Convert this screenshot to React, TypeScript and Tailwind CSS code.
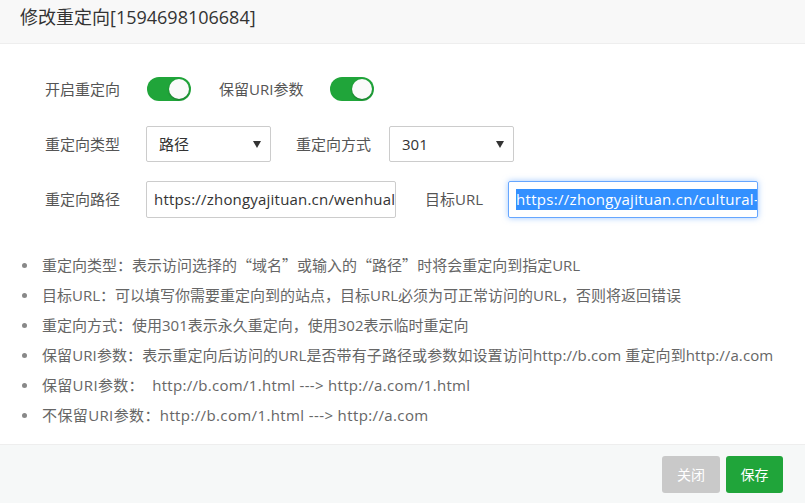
import React from "react";

const font = { fontFamily: '"Open Sans", "Noto Sans CJK SC", sans-serif' };
const cjk = { fontFamily: '"Noto Sans CJK SC", sans-serif' };

function Toggle() {
  return (
    <div className="relative w-[44px] h-[24px] rounded-full bg-[#20a53a]">
      <div className="absolute right-[2px] top-[2px] w-[20px] h-[20px] rounded-full bg-[#fafafa] shadow-[0_1px_2px_rgba(0,0,0,0.3)]" />
    </div>
  );
}

function Select({ value }: { value: string }) {
  return (
    <div className="w-[125px] h-[36px] border border-[#cccccc] rounded-[2px] flex items-center justify-between pl-[12px] pr-[9px] text-[15px] text-[#333]">
      <span>{value}</span>
      <svg width="8" height="8" viewBox="0 0 8 8">
        <path d="M0 1 L8 1 L4 8 Z" fill="#333" />
      </svg>
    </div>
  );
}

function Q({ c }: { c: string }) {
  return <span style={cjk}>{c}</span>;
}

export default function App() {
  const notes: { n: React.ReactNode; t: string }[] = [
    { n: <>重定向类型：表示访问选择的<Q c="“" />域名<Q c="”" />或输入的<Q c="“" />路径<Q c="”" />时将会重定向到指定URL</>, t: "" },
    { n: "目标URL：可以填写你需要重定向到的站点，目标URL必须为可正常访问的URL，否则将返回错误", t: "" },
    { n: "重定向方式：使用301表示永久重定向，使用302表示临时重定向", t: "" },
    { n: "保留URI参数：表示重定向后访问的URL是否带有子路径或参数如设置访问http://b.com 重定向到http://a.com", t: "tracking-[0.1px]" },
    { n: "保留URI参数：  http://b.com/1.html ---> http://a.com/1.html", t: "tracking-[0.3px]" },
    { n: "不保留URI参数：http://b.com/1.html ---> http://a.com", t: "tracking-[0.38px]" },
  ];
  return (
    <div className="w-[805px] h-[503px] bg-white flex flex-col overflow-hidden" style={font}>
      <div className="h-[44px] bg-[#f8f8f8] border-b border-[#eeeeee] pt-[5px] pl-[20px] text-[18px] leading-[24px] text-[#333] shrink-0">
        修改重定向[1594698106684]
      </div>
      <div className="flex-1 flex flex-col">
        <div className="flex flex-col pt-[33px] pl-[45px]">
          <div className="flex items-center h-[24px] text-[15px] text-[#555]">
            <span className="w-[102px]">开启重定向</span>
            <Toggle />
            <span className="ml-[28px] w-[111px]">保留URI参数</span>
            <Toggle />
          </div>
          <div className="flex items-center h-[36px] text-[15px] text-[#555] mt-[25px]">
            <span className="w-[101px]">重定向类型</span>
            <Select value="路径" />
            <span className="ml-[25px] w-[93px]">重定向方式</span>
            <Select value="301" />
          </div>
          <div className="flex items-center h-[37px] text-[15px] text-[#555] mt-[19px]">
            <span className="w-[101px]">重定向路径</span>
            <div className="w-[250px] h-[37px] border border-[#cccccc] rounded-[2px] flex items-center pl-[7px] overflow-hidden whitespace-nowrap text-[#333] tracking-[0.2px]">
              https://zhongyajituan.cn/wenhual
            </div>
            <span className="ml-[29px] w-[83px]">目标URL</span>
            <div className="w-[250px] h-[37px] border border-[#66a6ff] rounded-[2px] shadow-[0_0_6px_rgba(102,166,255,0.6)] flex items-center pl-[7px] overflow-hidden whitespace-nowrap tracking-[0.3px]">
              <span className="bg-[#3390ff] text-white leading-[21px]">https://zhongyajituan.cn/cultural-industry</span>
            </div>
          </div>
        </div>
        <ul className="mt-[32px] pl-[22px] flex flex-col text-[15px] text-[#666]">
          {notes.map((x, i) => (
            <li key={i} className="h-[30px] flex items-center whitespace-pre">
              <span className="w-[5px] h-[5px] rounded-full bg-[#888] mr-[15px] shrink-0" />
              <span className={x.t}>{x.n}</span>
            </li>
          ))}
        </ul>
      </div>
      <div className="h-[59px] bg-[#f6f8f8] border-t border-[#eeeeee] flex items-center justify-end pr-[22px] gap-[6px] shrink-0">
        <button className="w-[58px] h-[37px] bg-[#c9c9c9] text-white text-[14px] rounded-[3px]">关闭</button>
        <button className="w-[57px] h-[37px] bg-[#20a53a] text-white text-[14px] rounded-[3px]">保存</button>
      </div>
    </div>
  );
}
